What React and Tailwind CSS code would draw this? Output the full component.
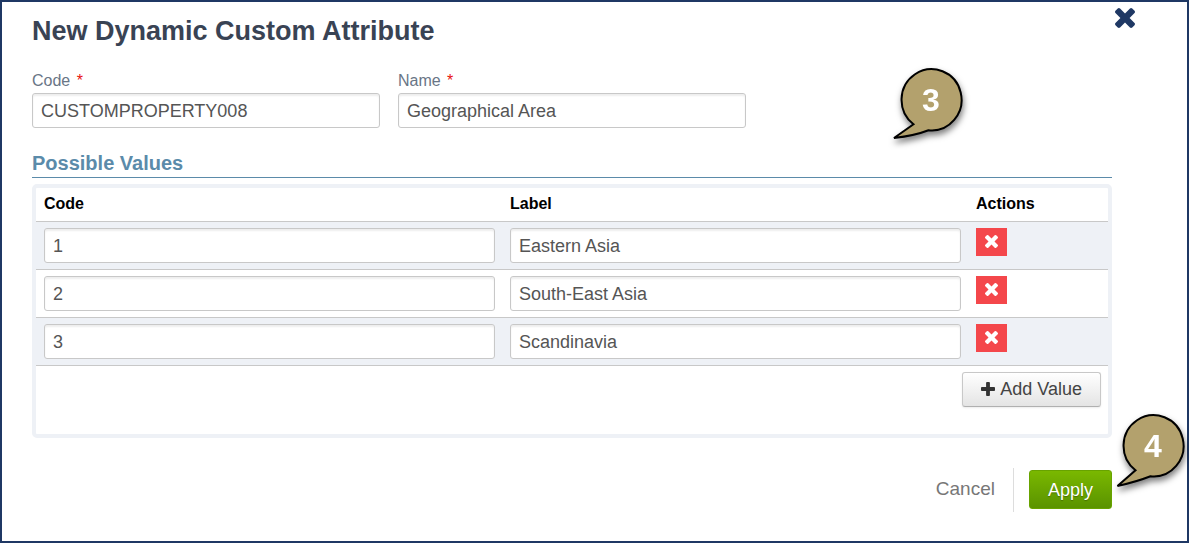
import React, { useState } from "react";

const TimesIcon = ({ className }) => (
  <svg viewBox="302 366 1188 1188" fill="currentColor" className={className}>
    <path d="M1490 1322q0 40-28 68l-136 136q-28 28-68 28t-68-28l-294-294-294 294q-28 28-68 28t-68-28l-136-136q-28-28-28-68t28-68l294-294-294-294q-28-28-28-68t28-68l136-136q28-28 68-28t68 28l294 294 294-294q28-28 68-28t68 28l136 136q28 28 28 68t-28 68l-294 294 294 294q28 28 28 68z" />
  </svg>
);

const PlusIcon = ({ className }) => (
  <svg viewBox="192 128 1408 1408" fill="currentColor" className={className}>
    <path d="M1600 736v192q0 40-28 68t-68 28h-416v416q0 40-28 68t-68 28h-192q-40 0-68-28t-28-68v-416h-416q-40 0-68-28t-28-68v-192q0-40 28-68t68-28h416v-416q0-40 28-68t68-28h192q40 0 68 28t28 68v416h416q40 0 68 28t28 68z" />
  </svg>
);

// numbered speech bubble, its tail points down to the left
const StepBubble = ({ number, tail, className }) => (
  <svg
    width="76"
    height="80"
    viewBox="0 0 76 80"
    className={`absolute overflow-visible drop-shadow-[1px_4px_3px_rgba(0,0,0,0.5)] ${className}`}
  >
    <path
      d={`M20.5 58.2 A30 30.6 0 1 1 35.5 64.2 Q22 69.5 ${tail} Z`}
      fill="#b3a16d"
      stroke="#000"
      strokeWidth="2"
    />
    <text
      x="38"
      y="45"
      textAnchor="middle"
      fill="#fff"
      className="text-[32px] font-bold"
    >
      {number}
    </text>
  </svg>
);

const inputStyle =
  "block w-full h-[35px] px-2 pt-[2px] text-lg text-[#555] bg-white border border-[#c8c8c8] rounded-[3px] shadow-[inset_0_2px_2px_rgba(0,0,0,0.07)] outline-none focus:border-[#5b8baa]";

const Field = ({ id, label, value, onChange }) => (
  <div className="flex-1">
    <label
      htmlFor={id}
      className="block mb-[2px] text-base leading-5 text-[#697586]"
    >
      {label} <span className="ml-[2px] text-[#e8110f]">*</span>
    </label>
    <input
      id={id}
      type="text"
      value={value}
      onChange={(event) => onChange(event.target.value)}
      className={inputStyle}
    />
  </div>
);

const App = () => {
  const [code, setCode] = useState("CUSTOMPROPERTY008");
  const [name, setName] = useState("Geographical Area");
  const [values, setValues] = useState([
    { id: 1, code: "1", label: "Eastern Asia" },
    { id: 2, code: "2", label: "South-East Asia" },
    { id: 3, code: "3", label: "Scandinavia" },
  ]);

  // update one field of one row
  const changeValue = (id, key, text) => {
    setValues(values.map((v) => (v.id === id ? { ...v, [key]: text } : v)));
  };

  const deleteValue = (id) => {
    setValues(values.filter((v) => v.id !== id));
  };

  const addValue = () => {
    setValues([...values, { id: Date.now(), code: "", label: "" }]);
  };

  return (
    <div className="min-h-screen bg-white border-2 border-[#1f3864] font-['Liberation_Sans',Arial,sans-serif]">
      {/* title and close button */}
      <header className="flex items-start justify-between pt-[6px] pl-[30px] pr-[52px]">
        <h1 className="pt-[7px] text-[27px] leading-8 font-bold text-[#394354]">
          New Dynamic Custom Attribute
        </h1>
        <button
          type="button"
          aria-label="Close"
          className="text-[#1f3864] cursor-pointer"
        >
          <TimesIcon className="w-5 h-5" />
        </button>
      </header>

      <main className="pl-[30px] pr-[75px] pt-6">
        <div className="relative">
          <div className="flex gap-[18px] w-[66.1%]">
            <Field id="code" label="Code" value={code} onChange={setCode} />
            <Field id="name" label="Name" value={name} onChange={setName} />
          </div>
          <StepBubble
            number="3"
            tail="1 72"
            className="right-[143px] -top-[5px]"
          />
        </div>

        <h2 className="mt-[23px] pb-[2px] text-xl leading-6 font-bold text-[#5b8baa] border-b border-[#5b8baa]">
          Possible Values
        </h2>

        {/* list of values */}
        <section className="mt-[6px] pb-[27px] border-4 border-[#eef1f6] rounded-[5px]">
          <table className="w-full table-fixed border-collapse">
            <thead>
              <tr className="h-[33px] text-left text-base leading-5 text-black border-b border-[#c8c8c8]">
                <th className="pl-2">Code</th>
                <th className="pl-2">Label</th>
                <th className="w-[140px] pl-2">Actions</th>
              </tr>
            </thead>
            <tbody>
              {values.map((v) => (
                <tr
                  key={v.id}
                  className="h-12 align-top border-b border-[#c8c8c8] odd:bg-[#eef1f6]"
                >
                  <td className="pt-[6px] pl-2 pr-[7px]">
                    <input
                      type="text"
                      aria-label="Code"
                      value={v.code}
                      onChange={(e) => changeValue(v.id, "code", e.target.value)}
                      className={inputStyle}
                    />
                  </td>
                  <td className="pt-[6px] pl-2 pr-[7px]">
                    <input
                      type="text"
                      aria-label="Label"
                      value={v.label}
                      onChange={(e) =>
                        changeValue(v.id, "label", e.target.value)
                      }
                      className={inputStyle}
                    />
                  </td>
                  <td className="pt-[6px] pl-2">
                    <button
                      type="button"
                      aria-label="Delete"
                      onClick={() => deleteValue(v.id)}
                      className="flex items-center justify-center w-[31px] h-7 text-white bg-[#f4474b] cursor-pointer"
                    >
                      <TimesIcon className="w-[13px] h-[13px]" />
                    </button>
                  </td>
                </tr>
              ))}
            </tbody>
          </table>
          <div className="flex justify-end pt-[6px] pr-[7px]">
            <button
              type="button"
              onClick={addValue}
              className="flex items-center gap-[5px] h-[35px] px-[18px] text-lg text-[#444] bg-linear-to-b from-white to-[#e4e4e4] border border-[#c8c8c8] border-b-[#b0b0b0] rounded-[3px] shadow-[0_1px_2px_rgba(0,0,0,0.08)] cursor-pointer"
            >
              <PlusIcon className="w-[14px] h-[14px] text-[#333]" />
              Add Value
            </button>
          </div>
        </section>

        {/* dialog buttons */}
        <footer className="flex items-center justify-end mt-[30px] mb-7">
          <button
            type="button"
            className="pr-[18px] h-11 text-[19px] text-[#777] border-r border-[#ddd] cursor-pointer"
          >
            Cancel
          </button>
          <div className="relative ml-[15px]">
            <button
              type="button"
              className="h-[39px] px-[18px] text-lg text-white bg-linear-to-b from-[#7ab800] to-[#5a9300] rounded-[3px] border border-[#68a300] text-shadow-[0_1px_1px_rgba(0,0,0,0.3)] cursor-pointer"
            >
              Apply
            </button>
            <StepBubble
              number="4"
              tail="2.5 74"
              className="-right-[79px] -top-[58px]"
            />
          </div>
        </footer>
      </main>
    </div>
  );
};

export default App;
